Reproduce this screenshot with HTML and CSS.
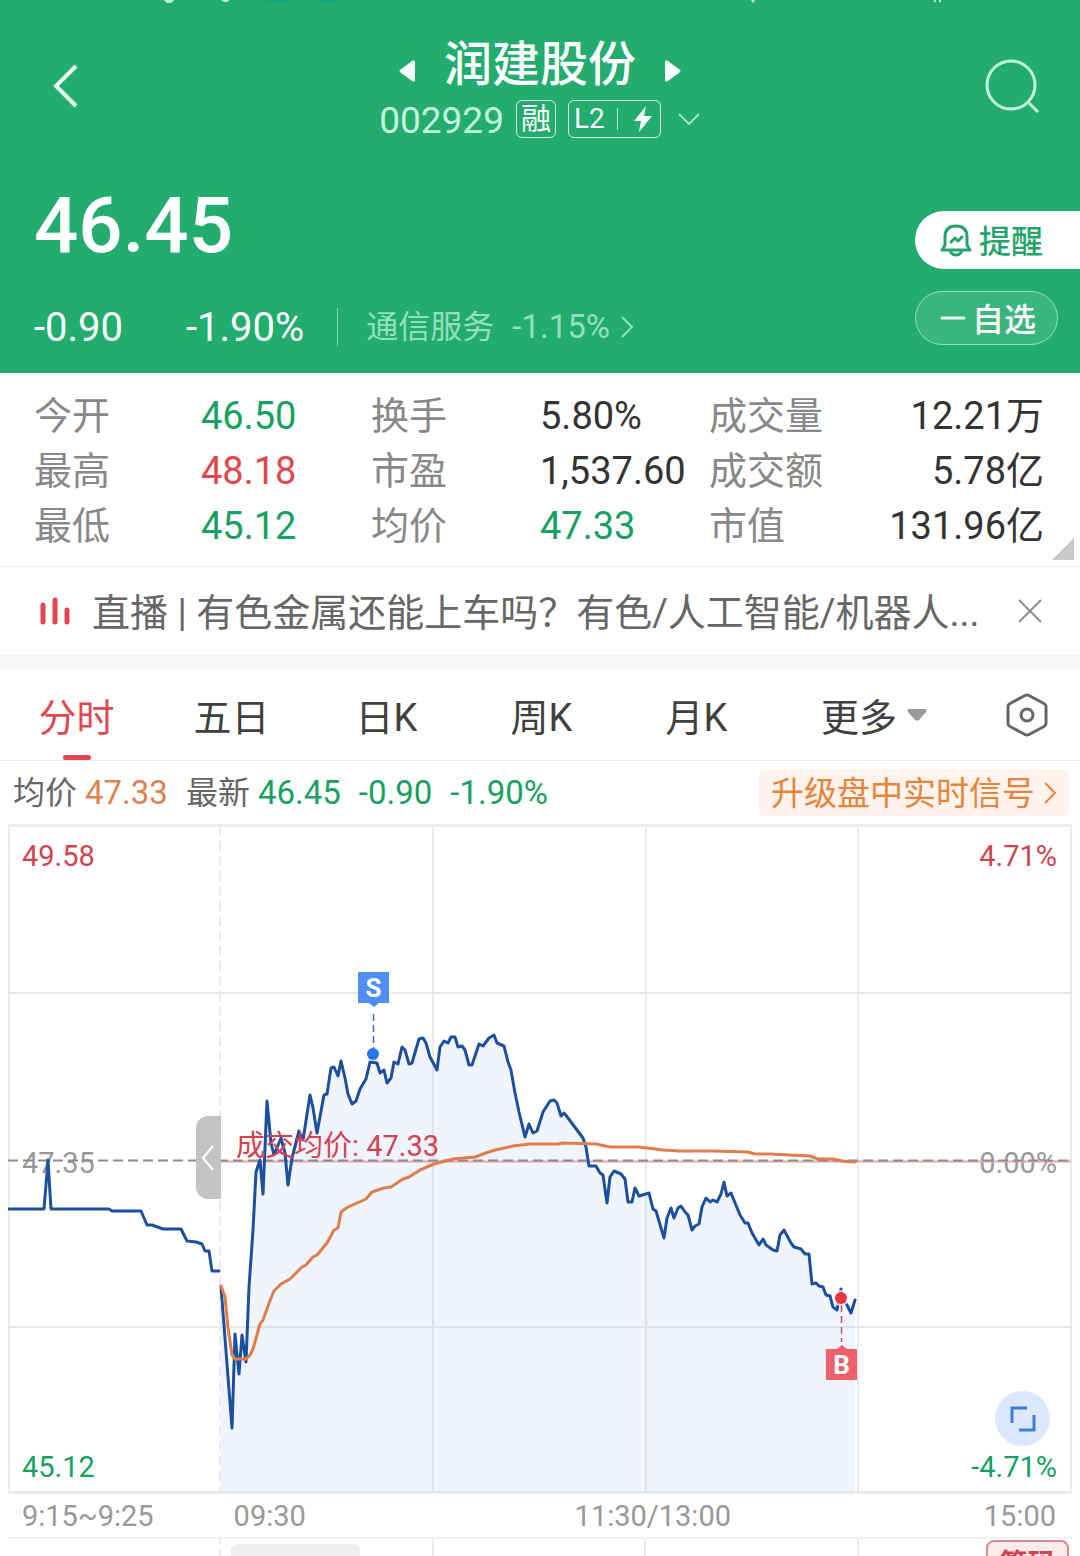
FILE: index.html
```html
<!DOCTYPE html>
<html lang="zh-CN">
<head>
  <meta charset="UTF-8">
  <meta name="viewport" content="width=device-width, initial-scale=1">
  <title>润建股份 002929</title>
  <link rel="stylesheet" href="styles.css">
</head>
<body>
<div class="app">

  <header class="header">
    <svg class="status-bar" viewBox="0 0 1080 4" aria-hidden="true">
      <path d="M164 0h10l-3 3h-4zM221 0h9l-3 2h-3zM751 0h4l-2 3zM934 0h2v2h-2zM939 0h2v2h-2z" fill="#c9f2dc"/>
      <path d="M264 0h30l-4 2h-22zM316 0h22l-4 2h-14z" fill="#1ba483"/>
    </svg>
    <div class="nav">
      <button class="icon-btn" aria-label="返回">
        <svg width="28" height="46" viewBox="0 0 28 46"><path d="M24 3L4 23l20 20" fill="none" stroke="#e9fff4" stroke-width="4"/></svg>
      </button>
      <div class="stock">
        <div class="stock-name">
          <button class="icon-btn" aria-label="上一只">
            <svg width="18" height="24" viewBox="0 0 18 24"><path d="M17 2v20q-1 1-3 0L2 13q-1-1 0-2L14 2q2-1 3 0z" fill="#fff"/></svg>
          </button>
          <h1>润建股份</h1>
          <button class="icon-btn" aria-label="下一只">
            <svg width="18" height="24" viewBox="0 0 18 24"><path d="M1 2v20q1 1 3 0l12-9q1-1 0-2L4 2q-2-1-3 0z" fill="#fff"/></svg>
          </button>
        </div>
        <div class="stock-code">
          <span class="code">002929</span>
          <span class="badge">融</span>
          <span class="badge badge-l2">L2<i class="sep"></i>
            <svg width="20" height="28" viewBox="0 0 20 28"><path d="M13 1L1 16h7L6 27l13-16h-8z" fill="#fff"/></svg>
          </span>
          <button class="icon-btn" aria-label="展开">
            <svg width="24" height="16" viewBox="0 0 24 16"><path d="M2 3l10 10L22 3" fill="none" stroke="#9be3c0" stroke-width="2"/></svg>
          </button>
        </div>
      </div>
      <button class="icon-btn" aria-label="搜索">
        <svg width="58" height="58" viewBox="0 0 58 58"><g fill="none" stroke="#c2f5dc" stroke-width="3"><circle cx="29" cy="28" r="24"/><path d="M47 46l9 9"/></g></svg>
      </button>
    </div>

    <div class="quote">
      <div class="quote-left">
        <div class="price">46.45</div>
        <div class="changes">
          <span class="change">-0.90</span>
          <span class="change-pct">-1.90%</span>
          <a class="sector" href="#">通信服务 <span>-1.15%</span>
            <svg width="14" height="24" viewBox="0 0 14 24"><path d="M2 2l10 10L2 22" fill="none" stroke="#94dfbb" stroke-width="2"/></svg>
          </a>
        </div>
      </div>
      <div class="quote-actions">
        <button class="btn-alert">
          <svg width="34" height="34" viewBox="0 0 34 34" fill="none" stroke="#26a36b" stroke-width="3" stroke-linecap="round" stroke-linejoin="round"><path d="M3 27h28L28 22V14Q28 3 17 3T6 14v8zM11 28q2 4 6 4t6-4M12 19l4-4 3 3 4-4"/></svg>
          <span>提醒</span>
        </button>
        <button class="btn-fav">
          <svg width="26" height="4" viewBox="0 0 26 4"><path d="M2 2h22" stroke="#e4fff2" stroke-width="3" stroke-linecap="round"/></svg>
          <span>自选</span>
        </button>
      </div>
    </div>
  </header>

  <section class="stats">
    <dl>
      <dt>今开</dt><dd class="down">46.50</dd>
      <dt>换手</dt><dd>5.80%</dd>
      <dt>成交量</dt><dd class="last">12.21万</dd>
      <dt>最高</dt><dd class="up">48.18</dd>
      <dt>市盈</dt><dd>1,537.60</dd>
      <dt>成交额</dt><dd class="last">5.78亿</dd>
      <dt>最低</dt><dd class="down">45.12</dd>
      <dt>均价</dt><dd class="down">47.33</dd>
      <dt>市值</dt><dd class="last">131.96亿</dd>
    </dl>
    <i class="corner"></i>
  </section>

  <section class="live">
    <svg width="30" height="30" viewBox="0 0 30 30" fill="none" stroke="#e0474f" stroke-width="5" stroke-linecap="round"><path d="M3 9v17M15 4v22M27 14v12"/></svg>
    <a href="#">直播 | 有色金属还能上车吗？有色/人工智能/机器人...</a>
    <button class="icon-btn" aria-label="关闭">
      <svg width="26" height="26" viewBox="0 0 26 26"><path d="M2 2l22 22M24 2L2 24" stroke="#8e8e8e" stroke-width="2"/></svg>
    </button>
  </section>

  <nav class="tabs">
    <button class="tab active">分时</button>
    <button class="tab">五日</button>
    <button class="tab">日K</button>
    <button class="tab">周K</button>
    <button class="tab">月K</button>
    <button class="tab">更多
      <svg width="20" height="14" viewBox="0 0 20 14"><path d="M1 1h18q1 1 0 3l-7 8q-2 1-4 0L1 4Q0 2 1 1z" fill="#999"/></svg>
    </button>
    <button class="tab" aria-label="设置">
      <svg width="42" height="44" viewBox="0 0 42 44" fill="none" stroke="#666"><path d="M19 2.500q2-1 4 0l15 8q2 1 2 3v17q0 2-2 3l-15 8q-2 1-4 0l-15-8q-2-1-2-3v-17q0-2 2-3z" stroke-width="3"/><circle cx="21" cy="22" r="6" stroke-width="3"/></svg>
    </button>
  </nav>

  <div class="info">
    <span class="pair">均价 <b class="avg">47.33</b></span>
    <span class="pair">最新 <b class="down">46.45</b></span>
    <b class="down">-0.90</b>
    <b class="down">-1.90%</b>
    <a class="signal" href="#"><span>升级盘中实时信号</span>
      <svg width="14" height="24" viewBox="0 0 14 24"><path d="M2 2l10 10L2 22" fill="none" stroke="#e5853c" stroke-width="2"/></svg>
    </a>
  </div>

  <div class="chart">
    <svg class="plot" viewBox="8 824 1064 670">
      <!-- grid -->
      <g class="grid">
        <path d="M9 993h1062M9 1327h1062M433 826v666M646 826v666M858 826v666"/>
        <path d="M220 826v668" stroke-dasharray="10 5"/>
        <path d="M9 825v668M1071 825v668"/>
        <path d="M8 825.500h1064M8 1492.500h1064" stroke-width="3"/>
      </g>

      <g class="label-grey">
        <text x="22" y="1173">47.35</text>
        <text x="1057" y="1173" text-anchor="end">0.00%</text>
      </g>

      <!-- price -->
      <path class="area" d="M221 1492L221 1287 232 1428 235 1334 239 1374 242 1335 246 1362 249 1287 253 1230 256 1172 260 1160 263 1194 267 1101 271 1143 274 1155 281 1138 285 1153 288 1185 292 1158 299 1131 303 1140 310 1095 313 1108 317 1133 324 1095 327 1094 331 1068 334 1067 338 1076 341 1061 345 1078 348 1094 352 1104 356 1101 360 1089 366 1079 370 1062 377 1063 380 1073 384 1070 387 1083 391 1078 394 1062 398 1064 402 1047 405 1050 409 1064 412 1063 419 1039 423 1038 426 1043 430 1057 437 1070 440 1047 444 1041 448 1043 451 1037 455 1037 458 1047 462 1046 465 1050 469 1065 472 1065 479 1044 483 1046 489 1038 494 1035 497 1043 504 1046 508 1062 511 1070 515 1093 519 1112 525 1137 529 1124 533 1133 537 1131 543 1112 550 1101 554 1100 557 1103 561 1116 564 1113 568 1118 583 1138 586 1147 589 1166 596 1166 600 1173 603 1175 607 1203 610 1177 614 1171 621 1174 625 1179 628 1202 632 1202 635 1188 639 1196 649 1193 653 1209 656 1211 664 1238 667 1218 671 1208 674 1218 678 1208 681 1206 685 1212 688 1215 692 1230 695 1226 699 1224 702 1207 706 1198 710 1202 713 1200 717 1202 721 1194 724 1182 727 1196 731 1193 740 1215 745 1223 748 1223 752 1233 759 1245 763 1239 766 1245 773 1250 777 1251 780 1235 784 1230 791 1243 794 1247 801 1249 805 1254 809 1254 812 1284 816 1283 819 1286 823 1287 826 1295 830 1296 833 1307 837 1310 841 1289 843 1300 847 1305 851 1313 855 1300V1492z"/>
      <path d="M220 1161.500h851" stroke="#e9a3a8" stroke-width="2"/>
      <path d="M8 1160.500h1063" stroke="#8c8c8c" stroke-width="2" stroke-dasharray="10 5"/>
      <polyline class="line-price" points="9,1209 44,1209 48,1160 51,1209 109,1209 112,1211 141,1211 147,1225 152,1225 163,1229 181,1229 187,1241 196,1242 202,1244 205,1251 209,1251 212,1271 219,1271"/>
      <polyline class="line-price" points="221,1287 232,1428 235,1334 239,1374 242,1335 246,1362 249,1287 253,1230 256,1172 260,1160 263,1194 267,1101 271,1143 274,1155 281,1138 285,1153 288,1185 292,1158 299,1131 303,1140 310,1095 313,1108 317,1133 324,1095 327,1094 331,1068 334,1067 338,1076 341,1061 345,1078 348,1094 352,1104 356,1101 360,1089 366,1079 370,1062 377,1063 380,1073 384,1070 387,1083 391,1078 394,1062 398,1064 402,1047 405,1050 409,1064 412,1063 419,1039 423,1038 426,1043 430,1057 437,1070 440,1047 444,1041 448,1043 451,1037 455,1037 458,1047 462,1046 465,1050 469,1065 472,1065 479,1044 483,1046 489,1038 494,1035 497,1043 504,1046 508,1062 511,1070 515,1093 519,1112 525,1137 529,1124 533,1133 537,1131 543,1112 550,1101 554,1100 557,1103 561,1116 564,1113 568,1118 583,1138 586,1147 589,1166 596,1166 600,1173 603,1175 607,1203 610,1177 614,1171 621,1174 625,1179 628,1202 632,1202 635,1188 639,1196 649,1193 653,1209 656,1211 664,1238 667,1218 671,1208 674,1218 678,1208 681,1206 685,1212 688,1215 692,1230 695,1226 699,1224 702,1207 706,1198 710,1202 713,1200 717,1202 721,1194 724,1182 727,1196 731,1193 740,1215 745,1223 748,1223 752,1233 759,1245 763,1239 766,1245 773,1250 777,1251 780,1235 784,1230 791,1243 794,1247 801,1249 805,1254 809,1254 812,1284 816,1283 819,1286 823,1287 826,1295 830,1296 833,1307 837,1310 841,1289 843,1300 847,1305 851,1313 855,1300"/>

      <!-- average -->
      <polyline class="line-avg" points="221,1286 225,1297 228,1328 232,1355 235,1359 246,1359 250,1355 253,1349 260,1324 263,1320 271,1298 274,1291 281,1284 290,1279 302,1267 306,1265 313,1257 317,1255 327,1243 334,1230 338,1228 341,1212 348,1207 357,1203 366,1199 372,1192 384,1188 391,1187 397,1183 403,1179 409,1177 420,1170 434,1164 453,1159 475,1157 483,1154 495,1150 513,1146 530,1144 558,1144 563,1143 596,1144 610,1147 639,1147 663,1150 680,1151 713,1151 748,1152 755,1154 770,1154 810,1156 818,1159 833,1159 842,1161 855,1162"/>

      <!-- sell / buy marks -->
      <path d="M373.500 1014v35" stroke="#3c6fae" stroke-width="1.500" stroke-dasharray="7 4"/>
      <circle cx="373" cy="1054" r="6" fill="#2577ee"/>
      <path d="M358 972h31v31h-10l-5 4-5-4h-11z" fill="#4f8ef5"/>
      <text class="mark" x="373.500" y="997">S</text>
      <circle cx="841" cy="1298" r="8" fill="#fff" opacity=".7"/>
      <path d="M841.500 1305v37" stroke="#c9536a" stroke-width="1.500" stroke-dasharray="7 4"/>
      <circle cx="841" cy="1298" r="6" fill="#ee3340"/>
      <path d="M826 1349h11l5-4 5 4h10v31h-31z" fill="#ee616b"/>
      <text class="mark" x="841.500" y="1374">B</text>

      <g class="label-red">
        <text x="22" y="866">49.58</text>
        <text x="1057" y="866" text-anchor="end">4.71%</text>
        <text x="236" y="1156">成交均价: 47.33</text>
      </g>
      <g class="label-green">
        <text x="22" y="1477">45.12</text>
        <text x="1057" y="1477" text-anchor="end">-4.71%</text>
      </g>
    </svg>
    <button class="handle" aria-label="收起">
      <svg width="14" height="28" viewBox="0 0 14 28"><path d="M12 2L2 14l10 12" fill="none" stroke="#fff" stroke-width="2"/></svg>
    </button>
    <button class="expand" aria-label="全屏">
      <svg width="26" height="26" viewBox="0 0 26 26"><path d="M2 17V2h15M24 9v15H9" fill="none" stroke="#3f79dc" stroke-width="3"/></svg>
    </button>
  </div>

  <div class="axis">
    <span class="axis-pre">9:15~9:25</span>
    <span class="axis-open">09:30</span>
    <span class="axis-mid">11:30/13:00</span>
    <span>15:00</span>
  </div>

  <div class="volume">
    <div class="cell cell-pre"></div>
    <div class="cell"><span class="pill"></span></div>
    <div class="cell"></div>
    <div class="cell"></div>
    <div class="cell cell-end"><button class="chips">筹码</button></div>
  </div>

</div>
</body>
</html>
```

FILE: styles.css
```css
* { box-sizing: border-box; }
body {
  margin: 0;
  background: #fff;
  color: #333;
  font-family: Roboto, "Noto Sans CJK SC", sans-serif;
  font-size: 38px;
}
h1, dl, dd { margin: 0; }
a { color: inherit; text-decoration: none; }
button { font: inherit; color: inherit; background: none; border: 0; padding: 0; }
b { font-weight: 400; }
svg { display: block; flex: none; }
.app { height: 100vh; overflow: hidden; }
.up { color: #e0474f; }
.down { color: #18a062; }
.icon-btn { display: flex; }

/* --- HEADER --- */
.header {
  position: relative;
  background: #22ac6e;
  color: #fff;
  padding: 32px 0 19px;
}
.status-bar { position: absolute; top: 0; left: 0; width: 100%; }
.nav {
  display: grid;
  grid-template-columns: 1fr auto 1fr;
  align-items: center;
  padding: 0 40px;
}
.nav > .icon-btn:first-child { padding-left: 12px; }
.nav > .icon-btn:last-child { justify-self: end; }
.stock { height: 108px; }
.stock-name {
  display: flex;
  align-items: center;
  justify-content: center;
  gap: 28px;
  height: 66px;
}
.stock-name .icon-btn { padding-top: 12px; }
.stock-name h1 { font-size: 48px; font-weight: 500; line-height: 64px; }
.stock-code {
  display: flex;
  align-items: center;
  justify-content: center;
  gap: 12px;
  height: 42px;
}
.code { padding-top: 2px; font-size: 37px; color: #c2f5dc; }
.badge {
  display: flex;
  align-items: center;
  height: 38px;
  padding: 0 4px;
  border: 1px solid #d5f7e6;
  border-radius: 6px;
  font-size: 30px;
  line-height: 32px;
}
.badge-l2 { padding: 0 7px 0 5px; font-size: 28px; }
.badge .sep { width: 1px; height: 22px; margin: 0 15px 0 12px; background: #a9e8c9; }
.stock-code .icon-btn { margin-left: 4px; }

.quote { display: flex; justify-content: space-between; padding: 40px 0 0 34px; }
.price { padding-top: 2px; font-size: 78px; font-weight: 500; line-height: 88px; }
.changes {
  display: flex;
  align-items: center;
  height: 54px;
  margin-top: 30px;
  font-size: 40px;
}
.change { width: 152px; }
.sector {
  display: flex;
  align-items: center;
  gap: 18px;
  height: 38px;
  margin-left: 33px;
  padding-left: 28px;
  border-left: 1px solid #7fd2a9;
  font-size: 32px;
  line-height: 38px;
  color: #94dfbb;
}
.sector span { font-size: 33px; }
.sector svg { margin-left: -8px; }
.quote-actions {
  display: flex;
  flex-direction: column;
  gap: 22px;
  padding-top: 31px;
  width: 165px;
}
.quote-actions button {
  display: flex;
  align-items: center;
  gap: 6px;
  padding-left: 24px;
  font-size: 32px;
  font-weight: 500;
}
.quote-actions span { padding-bottom: 2px; }
.btn-alert {
  height: 58px;
  background: #fff;
  color: #26a36b;
  border-radius: 29px 0 0 29px;
}
.quote-actions .btn-fav {
  width: 143px;
  height: 54px;
  background: #39b57d;
  border: 1px solid #90dfb8;
  border-radius: 27px;
}

/* --- STATS --- */
.stats { position: relative; padding: 16px 36px 12px 34px; border-bottom: 1px solid #ebebeb; }
.stats dl {
  display: grid;
  grid-template-columns: 167fr 170fr 169fr 169fr 115fr 220fr;
  line-height: 55px;
}
.stats dt { color: #888; white-space: nowrap; }
.stats dd { white-space: nowrap; }
.stats .last { text-align: right; }
.corner {
  position: absolute;
  right: 6px;
  bottom: 6px;
  border: 11px solid transparent;
  border-right-color: #c8c8c8;
  border-bottom-color: #c8c8c8;
}

/* --- LIVE --- */
.live {
  display: flex;
  align-items: center;
  height: 102px;
  padding: 0 37px 0 40px;
  border-bottom: 14px solid #f7f7f7;
  color: #666;
}
.live a { flex: 1; margin-left: 22px; padding-bottom: 3px; white-space: nowrap; }

/* --- TABS --- */
.tabs {
  display: grid;
  grid-template-columns: repeat(5, 155fr) 200fr 105fr;
  height: 92px;
  border-bottom: 1px solid #ebebeb;
}
.tab {
  position: relative;
  display: flex;
  align-items: center;
  justify-content: center;
  gap: 10px;
  padding-right: 2px;
  color: #404040;
}
.tab.active { color: #e0474f; }
.tab.active::after {
  content: "";
  position: absolute;
  bottom: 0;
  width: 28px;
  height: 5px;
  border-radius: 3px;
  background: #e0474f;
}

.info {
  display: flex;
  align-items: center;
  gap: 18px;
  height: 63px;
  padding: 0 11px 0 13px;
  font-size: 32px;
  color: #666;
}
.info b { font-size: 33px; }
.pair { display: flex; align-items: center; gap: 8px; line-height: 44px; }
.avg { color: #de824f; }
.signal {
  display: flex;
  align-items: center;
  gap: 8px;
  height: 47px;
  margin-left: auto;
  padding: 0 12px;
  border-radius: 6px;
  background: #fff3ec;
  color: #e5853c;
  font-size: 33px;
}
.signal span { padding-bottom: 3px; }

/* --- CHART --- */
.chart { position: relative; margin: 0 8px; }
.plot { width: 100%; font-size: 29px; }
.grid { fill: none; stroke: #ebebeb; stroke-width: 2; }
.area { fill: #2468e8; fill-opacity: .07; }
.line-price, .line-avg { fill: none; stroke-width: 3; stroke-linejoin: round; stroke-linecap: round; }
.line-price { stroke: #1d4f9f; }
.line-avg { stroke: #e07d4c; }
.label-grey { fill: #999; }
.label-red { fill: #d2434f; }
.label-green { fill: #18a062; }
.mark { fill: #fff; font-size: 26px; font-weight: 700; text-anchor: middle; }
.handle {
  position: absolute;
  top: 292px;
  right: 80%;
  display: flex;
  align-items: center;
  justify-content: center;
  width: 25px;
  height: 83px;
  border-radius: 12px 0 0 12px;
  background: #c3c3c3;
}
.expand {
  position: absolute;
  right: 22px;
  bottom: 48px;
  display: flex;
  align-items: center;
  justify-content: center;
  width: 55px;
  height: 55px;
  border-radius: 50%;
  background: #dde7fb;
}

.axis {
  display: grid;
  grid-template-columns: 20% auto 1fr auto;
  align-items: center;
  height: 45px;
  margin: 0 8px;
  padding-right: 16px;
  border-bottom: 2px solid #f1f1f1;
  font-size: 29px;
  color: #999;
}
.axis-pre { padding-left: 14px; }
.axis-open { padding-left: 16px; }
.axis-mid { padding-left: 16px; text-align: center; }
.volume {
  display: grid;
  grid-template-columns: repeat(5, 1fr);
  height: 80px;
  margin: 0 8px;
}
.cell { border-right: 2px solid #ebebeb; }
.cell-pre { border-right-style: dashed; }
.cell-end { border-right: 0; }
.pill {
  display: block;
  width: 129px;
  height: 40px;
  margin: 5px 0 0 10px;
  border-radius: 6px;
  background: #eee;
}
.chips {
  display: block;
  width: 83px;
  height: 44px;
  margin: 1px 3px 0 auto;
  border: 2px solid #d98a8f;
  border-radius: 8px;
  background: #fdecec;
  color: #d2434f;
  font-size: 28px;
  font-weight: 700;
}
```
